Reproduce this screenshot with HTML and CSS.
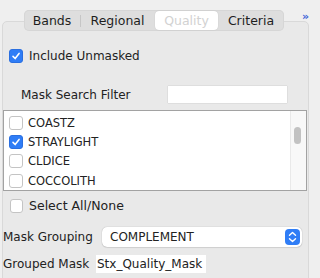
FILE: index.html
```html
<!DOCTYPE html>
<html>

<head>
    <title>Quality</title>
    <link rel="stylesheet" href="styles.css">
</head>

<body>
    <div class="header">
        <div class="segmented">
            <div class="seg seg-bands">Bands</div>
            <div class="seg-divider"></div>
            <div class="seg seg-regional">Regional</div>
            <div class="seg seg-quality selected">Quality</div>
            <div class="seg seg-criteria">Criteria</div>
        </div>
        <div class="more">&raquo;</div>
    </div>

    <div class="panel">
        <div class="row include-row">
            <span class="check checked"><svg viewBox="0 0 14 14"><path d="M3.5 7.4 L6 10 L10.6 4" /></svg></span>
            <span class="label">Include Unmasked</span>
        </div>

        <div class="row filter-row">
            <span class="label filter-label">Mask Search Filter</span>
            <input type="text" class="text-field filter-field">
        </div>

        <div class="mask-list">
            <div class="list-items">
                <div class="list-item"><span class="check"></span><span>COASTZ</span></div>
                <div class="list-item"><span class="check checked"><svg viewBox="0 0 14 14"><path d="M3.5 7.4 L6 10 L10.6 4" /></svg></span><span>STRAYLIGHT</span></div>
                <div class="list-item"><span class="check"></span><span>CLDICE</span></div>
                <div class="list-item"><span class="check"></span><span>COCCOLITH</span></div>
            </div>
            <div class="scroll-track">
                <div class="scroll-thumb"></div>
            </div>
        </div>

        <div class="row select-row">
            <span class="check"></span>
            <span class="label">Select All/None</span>
        </div>

        <div class="row grouping-row">
            <span class="label">Mask Grouping</span>
            <div class="combo">
                <span>COMPLEMENT</span>
                <span class="stepper">
                    <svg viewBox="0 0 15 16"><path d="M4.5 6.3 L7.5 3.5 L10.5 6.3 M4.5 9.7 L7.5 12.5 L10.5 9.7" /></svg>
                </span>
            </div>
        </div>

        <div class="row grouped-row">
            <span class="label">Grouped Mask</span>
            <div class="text-field grouped-field">Stx_Quality_Mask</div>
        </div>
    </div>
</body>

</html>
```

FILE: styles.css
```css
body {
    margin: 0;
    height: 278px;
    overflow: hidden;
    background-color: #efefef;
    font-family: "DejaVu Sans", sans-serif;
    font-size: 12px;
    color: #222;
}

.header {
    position: relative;
    z-index: 1;
    display: flex;
    align-items: center;
    height: 21px;
    margin-top: 10px;
    padding-left: 24px;
}

.segmented {
    display: flex;
    align-items: center;
    width: 260px;
    height: 21px;
    background-color: #dedede;
    border-radius: 5px;
    box-shadow: inset 0 0 0 1px #d6d6d6;
}

.seg {
    text-align: center;
    line-height: 21px;
    font-size: 12.5px;
    color: #1e1e1e;
}

.seg-bands {
    width: 56px;
}

.seg-divider {
    width: 1px;
    height: 12px;
    background-color: #c6c6c6;
}

.seg-regional {
    width: 73px;
}

.seg-quality {
    width: 63px;
    height: 19px;
    line-height: 19px;
    margin: 0 1px;
}

.seg-criteria {
    width: 64px;
}

.selected {
    background-color: #fff;
    border-radius: 4px;
    color: #d2d2d2;
    box-shadow: 0 0 1px rgba(0, 0, 0, 0.2);
}

.more {
    margin-left: 18px;
    margin-top: -8px;
    font-size: 11px;
    font-weight: bold;
    color: #3d63d8;
}

.panel {
    margin: -10px 11px 0 2px;
    height: 270px;
    background-color: #e9e9e9;
    border: 1px solid #d9d9d9;
    border-radius: 5px;
    box-sizing: border-box;
}

.row {
    display: flex;
    align-items: center;
}

.check {
    display: inline-flex;
    width: 14px;
    height: 14px;
    box-sizing: border-box;
    background-color: #fff;
    border: 1px solid #c4c4c4;
    border-radius: 3px;
}

.check.checked {
    background-color: #2f7df6;
    border-color: #2a6fe0;
}

.check svg {
    width: 12px;
    height: 12px;
}

.check path {
    fill: none;
    stroke: #fff;
    stroke-width: 1.8;
    stroke-linecap: round;
    stroke-linejoin: round;
}

.include-row {
    height: 20px;
    margin-top: 24px;
    padding-left: 6px;
}

.include-row .label {
    margin-left: 6px;
}

.filter-row {
    height: 17px;
    margin-top: 20px;
    padding-left: 18px;
}

.filter-label {
    width: 147px;
}

.text-field {
    box-sizing: border-box;
    height: 17px;
    background-color: #fff;
    border: none;
    outline: none;
}

.filter-field {
    width: 119px;
    box-shadow: 0 0 1px rgba(0, 0, 0, 0.25);
}

.mask-list {
    display: flex;
    height: 79px;
    margin-top: 7px;
    margin-right: 1px;
    background-color: #fff;
    border: 1px solid #a2a2a2;
}

.list-items {
    flex: 1;
    padding-top: 2px;
}

.list-item {
    display: flex;
    align-items: center;
    height: 19.3px;
    padding-left: 5px;
    font-size: 11.5px;
}

.list-item .check {
    margin-right: 5px;
}

.scroll-track {
    width: 15px;
    background-color: #f8f8f8;
    border-left: 1px solid #e9e9e9;
}

.scroll-thumb {
    width: 7px;
    height: 17px;
    margin: 16px 0 0 3px;
    background-color: #c2c2c2;
    border-radius: 4px;
}

.select-row {
    height: 19px;
    margin-top: 5px;
    padding-left: 7px;
}

.select-row .check {
    width: 13px;
    height: 14px;
}

.select-row .label {
    margin-left: 6px;
    font-size: 12.5px;
}

.grouping-row {
    height: 20px;
    margin-top: 12px;
}

.grouping-row .label {
    width: 99px;
}

.combo {
    display: flex;
    align-items: center;
    justify-content: space-between;
    width: 200px;
    height: 20px;
    box-sizing: border-box;
    padding: 0 2px 0 8px;
    background-color: #fff;
    border-radius: 5px;
    box-shadow: 0 0 1px rgba(0, 0, 0, 0.35), 0 1px 1px rgba(0, 0, 0, 0.08);
}

.stepper {
    display: flex;
    width: 15px;
    height: 16px;
    background-color: #2f7df6;
    border-radius: 4px;
}

.stepper svg {
    width: 15px;
    height: 16px;
}

.stepper path {
    fill: none;
    stroke: #fff;
    stroke-width: 1.4;
    stroke-linecap: round;
    stroke-linejoin: round;
}

.grouped-row {
    height: 18px;
    margin-top: 8px;
}

.grouped-row .label {
    width: 93px;
}

.grouped-field {
    width: 110px;
    height: 18px;
    padding-left: 1px;
    line-height: 18px;
}
```
